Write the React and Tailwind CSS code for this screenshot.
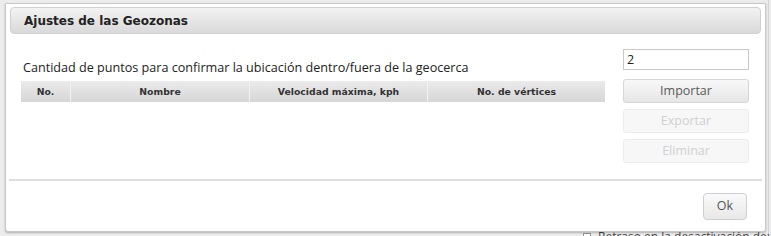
import React from 'react';

const cols = [
  { label: 'No.', w: 'w-[49px]' },
  { label: 'Nombre', w: 'w-[179px]' },
  { label: 'Velocidad máxima, kph', w: 'w-[178px]' },
  { label: 'No. de vértices', w: 'flex-1' },
];

function SideButton({ children, disabled }) {
  return (
    <button
      disabled={disabled}
      className={`h-[24px] w-full rounded-[3px] border text-[12.5px] ${
        disabled
          ? 'border-[#ececec] bg-[#f7f7f7] text-[#d0d0d0]'
          : 'border-[#d6d6d6] bg-gradient-to-b from-[#f8f8f8] to-[#e6e6e6] text-[#5a5a5a]'
      }`}
    >
      {children}
    </button>
  );
}

export default function App() {
  return (
    <div className="relative w-[771px] h-[236px] overflow-hidden bg-[#ececec] font-['Open_Sans',sans-serif]">
      {/* page behind the dialog */}
      <div className="absolute left-[768px] top-0 h-full w-px bg-[#d4d4d4]" />
      <div className="absolute left-[583px] top-[228px] flex items-center gap-[7px] text-[12px] text-[#444]">
        <span className="h-[8px] w-[8px] border border-[#999] bg-white" />
        <span>Retraso en la desactivación de:</span>
      </div>

      <div className="absolute z-10 left-[5px] top-[3px] w-[761px] h-[229px] flex flex-col bg-white border border-[#c9c9c9] rounded-b-[3px] shadow-[0_1px_2px_rgba(0,0,0,0.25)]">
        <div className="mx-[4px] mt-[3px] h-[27px] flex items-center pl-[13px] rounded-[4px] border border-[#d0d0d0] bg-gradient-to-b from-[#f3f3f3] to-[#d9d9d9] font-['DejaVu_Sans',sans-serif] text-[12px] font-bold text-[#222]">
          Ajustes de las Geozonas
        </div>

        <div className="h-[145px] flex pl-[15px] pr-[16px]">
          <div className="flex-1 flex flex-col pt-[26px]">
            <div className="text-[12.6px] text-[#222] leading-[16px] pl-[2px]">
              Cantidad de puntos para confirmar la ubicación dentro/fuera de la geocerca
            </div>
            <div className="mt-[5px] w-[584px] h-[21px] flex bg-gradient-to-b from-[#ebebeb] to-[#d6d6d6] font-['DejaVu_Sans',sans-serif] text-[9.3px] font-bold text-[#333]">
              {cols.map((c, i) => (
                <div
                  key={c.label}
                  className={`${c.w} flex items-center justify-center ${i > 0 ? 'border-l border-[#f2f2f2]' : ''}`}
                >
                  {c.label}
                </div>
              ))}
            </div>
          </div>

          <div className="w-[126px] flex flex-col gap-[6px] pt-[15px]">
            <input
              defaultValue="2"
              className="h-[21px] w-full border border-[#c8c8c8] px-[3px] text-[12.5px] text-[#222] outline-none mb-[3px]"
            />
            <SideButton>Importar</SideButton>
            <SideButton disabled>Exportar</SideButton>
            <SideButton disabled>Eliminar</SideButton>
          </div>
        </div>

        <div className="mx-[3px] h-[2px] bg-[#dedede]" />
        <div className="flex-1 flex items-center justify-end pr-[18px]">
          <button className="h-[27px] w-[44px] rounded-[4px] border border-[#cfcfcf] bg-gradient-to-b from-[#fafafa] to-[#e8e8e8] text-[12.5px] text-[#555]">
            Ok
          </button>
        </div>
      </div>
    </div>
  );
}
